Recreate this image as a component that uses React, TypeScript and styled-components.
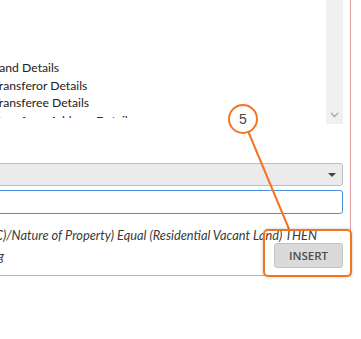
import styled, { createGlobalStyle } from 'styled-components';

const GlobalStyle = createGlobalStyle`
  html, body {
    margin: 0;
    padding: 0;
    background: #ffffff;
    overflow: hidden;
  }
  body {
    position: relative;
    width: 361px;
    height: 339px;
    font-family: Lato, 'Open Sans', 'Liberation Sans', sans-serif;
    color: #333333;
  }
`;

const Panel = styled.section`
  box-sizing: border-box;
  width: 359px;
  margin-left: -8px;
  padding: 0 7px 7px 1px;
  display: flex;
  flex-direction: column;
  border-right: 1px solid #dfa3a3;
  border-bottom: 1px solid #dfa3a3;
`;

const ListBox = styled.div`
  display: flex;
  height: 124px;
  background: #ffffff;
`;

const Items = styled.ul`
  flex: 1;
  box-sizing: border-box;
  height: 118px;
  margin: 0;
  padding: 59px 0 0;
  list-style: none;
  overflow: hidden;
`;

const Item = styled.li`
  font-size: 12.2px;
  line-height: 17.5px;
  color: #222222;
  white-space: nowrap;
`;

const Scrollbar = styled.div`
  width: 17px;
  display: flex;
  align-items: flex-end;
  justify-content: center;
  padding-bottom: 6px;
  box-sizing: border-box;
  background: #f0f0f0;
`;

const Select = styled.div`
  box-sizing: border-box;
  height: 23px;
  margin-top: 39px;
  display: flex;
  align-items: center;
  justify-content: flex-end;
  padding-right: 6px;
  background: #ebebeb;
  border: 1px solid #bdbdbd;
  border-radius: 3px;
`;

const Caret = styled.span`
  width: 0;
  height: 0;
  border-left: 4px solid transparent;
  border-right: 4px solid transparent;
  border-top: 4px solid #444444;
`;

const Input = styled.div`
  box-sizing: border-box;
  height: 24px;
  margin-top: 4px;
  background: #ffffff;
  border: 1px solid #4a8fdc;
  border-radius: 3px;
`;

const RuleLine = styled.div<{ $end: number }>`
  width: ${(p) => p.$end}px;
  display: flex;
  justify-content: flex-end;
  white-space: nowrap;
  font-size: 12.8px;
  font-style: italic;
  line-height: 16px;
  color: #3a3a3a;
`;

const FirstLine = styled(RuleLine)`
  margin-top: 13px;
`;

const Footer = styled.div`
  display: flex;
  align-items: center;
  justify-content: space-between;
`;

const InsertButton = styled.button`
  box-sizing: border-box;
  width: 69px;
  height: 25px;
  padding: 0;
  background: #dadada;
  border: 1px solid #c3c3c3;
  border-radius: 3px;
  font-family: 'Open Sans', 'Liberation Sans', sans-serif;
  font-size: 11.5px;
  font-weight: 600;
  color: #4d4d4d;
`;

const Highlight = styled.div`
  position: absolute;
  left: 263px;
  top: 229px;
  width: 89px;
  height: 48px;
  box-sizing: border-box;
  border: 2px solid #f27522;
  border-radius: 5px;
  box-shadow: 0 0 3px rgba(0, 0, 0, 0.25);
`;

const Callout = styled.div`
  position: absolute;
  left: 228px;
  top: 104px;
  width: 30px;
  height: 30px;
  box-sizing: border-box;
  border: 2px solid #f27522;
  border-radius: 50%;
  background: #ffffff;
  display: flex;
  align-items: center;
  justify-content: center;
  font-family: 'Liberation Sans', Arial, sans-serif;
  font-size: 14px;
  color: #444444;
`;

const Leader = styled.svg`
  position: absolute;
  left: 0;
  top: 0;
  pointer-events: none;
`;

const App = () => (
  <>
    <GlobalStyle />
    <Panel>
      <ListBox>
        <Items>
          <Item>Land Details</Item>
          <Item>Transferor Details</Item>
          <Item>Transferee Details</Item>
          <Item>Transferor Address Details</Item>
        </Items>
        <Scrollbar>
          <svg width="9" height="6" viewBox="0 0 9 6">
            <polyline points="1,1 4.5,4.5 8,1" fill="none" stroke="#a6a6a6" strokeWidth="1.3" />
          </svg>
        </Scrollbar>
      </ListBox>
      <Select>
        <Caret />
      </Select>
      <Input />
      <FirstLine $end={324}>
        IF (Property Details(LC)/Nature of Property) Equal (Residential Vacant Land) THEN
      </FirstLine>
      <Footer>
        <RuleLine $end={11}>Processing</RuleLine>
        <InsertButton type="button">INSERT</InsertButton>
      </Footer>
    </Panel>
    <Leader width="361" height="339">
      <line x1="248" y1="131" x2="289" y2="229" stroke="#f27522" strokeWidth="2" />
    </Leader>
    <Highlight />
    <Callout>5</Callout>
  </>
);

export default App;
